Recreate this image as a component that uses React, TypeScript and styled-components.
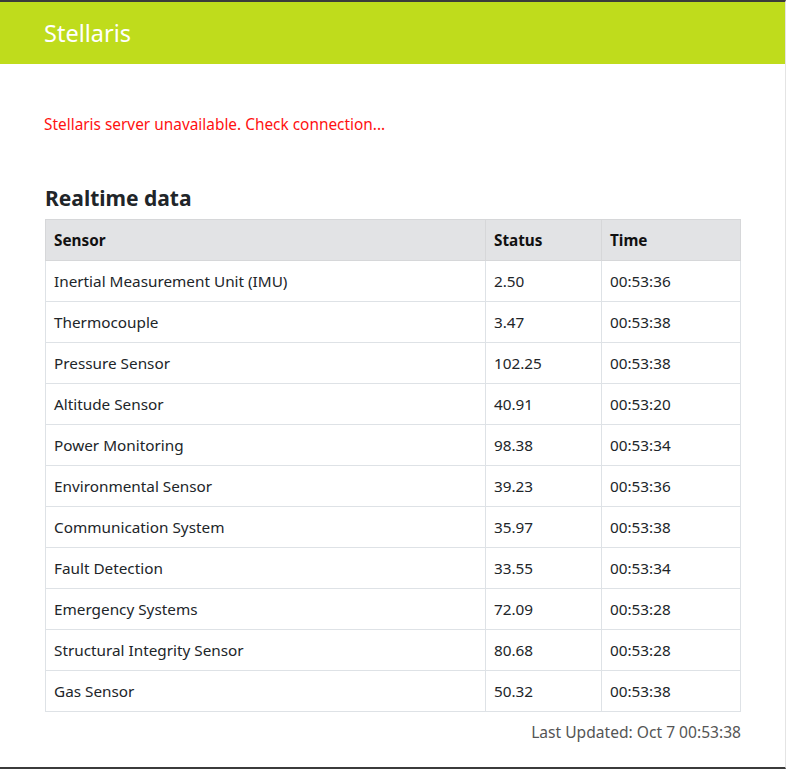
import React from "react";
import styled, { createGlobalStyle } from "styled-components";

const Global = createGlobalStyle`
  html, body { margin: 0; padding: 0; background: #fff; }
  body { font-family: "Noto Sans", "Open Sans", sans-serif; color: #212529; }
  * { box-sizing: border-box; }
`;

const Frame = styled.div`
  height: 769px;
  border-top: 2px solid #3b3b3b;
  border-bottom: 2px solid #3b3b3b;
  border-right: 1px solid #e4e4e4;
  display: flex;
  flex-direction: column;
  overflow: hidden;
`;

const Header = styled.header`
  background: #bfdc1c;
  height: 62px;
  display: flex;
  align-items: center;
  padding: 0 44px;
`;

const Brand = styled.h1`
  margin: 0;
  color: #fff;
  font-size: 23.5px;
  font-weight: 400;
`;

const Main = styled.main`
  padding: 49px 44px 0 44px;
  display: flex;
  flex-direction: column;
`;

const ErrorText = styled.p`
  margin: 0;
  color: #f11;
  font-size: 15.4px;
  line-height: 24px;
`;

const Heading = styled.h2`
  margin: 46px 0 6px 1px;
  font-size: 21px;
  font-weight: 700;
  line-height: 30px;
  color: #212529;
`;

const Table = styled.table`
  width: 696px;
  margin-left: 1px;
  border-collapse: collapse;
  font-size: 15.3px;
`;

const Th = styled.th<{ $w?: number }>`
  background: #e2e3e5;
  text-align: left;
  font-weight: 700;
  height: 41px;
  padding: 0 8px;
  border: 1px solid #d6d7d9;
  color: #111;
  width: ${(p) => (p.$w ? `${p.$w}px` : "auto")};
`;

const Td = styled.td`
  height: 41px;
  padding: 0 8px;
  border: 1px solid #dee2e6;
  color: #212529;
`;

const Footer = styled.div`
  width: 697px;
  text-align: right;
  color: #555;
  font-size: 15.6px;
  margin-top: 9px;
`;

const rows: [string, string, string][] = [
  ["Inertial Measurement Unit (IMU)", "2.50", "00:53:36"],
  ["Thermocouple", "3.47", "00:53:38"],
  ["Pressure Sensor", "102.25", "00:53:38"],
  ["Altitude Sensor", "40.91", "00:53:20"],
  ["Power Monitoring", "98.38", "00:53:34"],
  ["Environmental Sensor", "39.23", "00:53:36"],
  ["Communication System", "35.97", "00:53:38"],
  ["Fault Detection", "33.55", "00:53:34"],
  ["Emergency Systems", "72.09", "00:53:28"],
  ["Structural Integrity Sensor", "80.68", "00:53:28"],
  ["Gas Sensor", "50.32", "00:53:38"],
];

export default function App() {
  return (
    <>
      <Global />
      <Frame>
        <Header>
          <Brand>Stellaris</Brand>
        </Header>
        <Main>
          <ErrorText>Stellaris server unavailable. Check connection...</ErrorText>
          <Heading>Realtime data</Heading>
          <Table>
            <thead>
              <tr>
                <Th $w={440}>Sensor</Th>
                <Th $w={116}>Status</Th>
                <Th>Time</Th>
              </tr>
            </thead>
            <tbody>
              {rows.map((r) => (
                <tr key={r[0]}>
                  <Td>{r[0]}</Td>
                  <Td>{r[1]}</Td>
                  <Td>{r[2]}</Td>
                </tr>
              ))}
            </tbody>
          </Table>
          <Footer>Last Updated: Oct 7 00:53:38</Footer>
        </Main>
      </Frame>
    </>
  );
}
